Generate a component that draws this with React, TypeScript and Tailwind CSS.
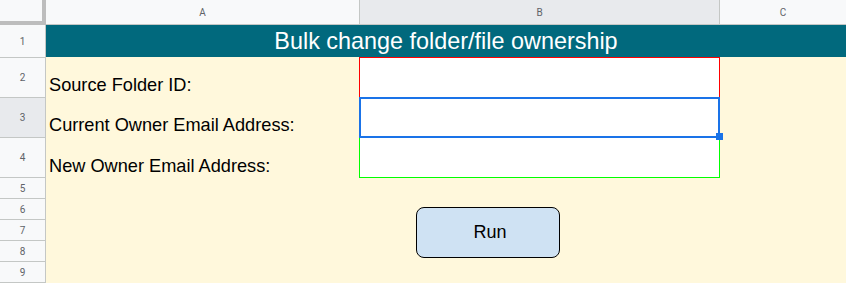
import React from "react";

const hdrFont = { fontFamily: "Roboto, 'Liberation Sans', Arial, sans-serif" };
const cellFont = { fontFamily: "'Liberation Sans', Arial, sans-serif" };

const rowHeights: { n: number; h: string; sel?: boolean }[] = [
  { n: 1, h: "h-[33px]" },
  { n: 2, h: "h-[40px]" },
  { n: 3, h: "h-[40px]", sel: true },
  { n: 4, h: "h-[40px]" },
  { n: 5, h: "h-[21px]" },
  { n: 6, h: "h-[21px]" },
  { n: 7, h: "h-[21px]" },
  { n: 8, h: "h-[21px]" },
  { n: 9, h: "h-[21px]" },
];

function Label({ text, h }: { text: string; h: string }) {
  return (
    <div className={`${h} flex items-end pl-[3px] pb-[2px] text-[18.2px] leading-[20px] text-black whitespace-nowrap`} style={cellFont}>
      {text}
    </div>
  );
}

export default function App() {
  return (
    <div className="relative w-[846px] h-[283px] overflow-hidden bg-[#fff8dc]">
      {/* column headers */}
      <div className="flex h-[25px] bg-[#f8f9fa] text-[10px] text-[#5f6368]" style={hdrFont}>
        <div className="w-[46px] h-[25px] border-r-[4px] border-b-[4px] border-[#bdbdbd] bg-[#f8f9fa]" />
        <div className="w-[314px] flex items-center justify-center border-r border-b border-[#c4c7c5]">A</div>
        <div className="w-[360px] flex items-center justify-center border-r border-b border-[#c4c7c5] bg-[#e8eaed]">B</div>
        <div className="flex-1 flex items-center justify-center border-b border-[#c4c7c5]">C</div>
      </div>

      <div className="flex">
        {/* row headers */}
        <div className="w-[46px] flex flex-col text-[10px] text-[#5f6368]" style={hdrFont}>
          {rowHeights.map((r) => (
            <div
              key={r.n}
              className={`${r.h} flex items-center justify-center border-r border-b border-[#c4c7c5] ${r.sel ? "bg-[#e8eaed]" : "bg-[#f8f9fa]"}`}
            >
              {r.n}
            </div>
          ))}
        </div>

        {/* sheet body */}
        <div className="flex-1 flex flex-col">
          <div
            className="h-[32px] bg-[#01697d] flex items-center justify-center text-white text-[23.4px] leading-[26px] whitespace-nowrap"
            style={cellFont}
          >
            Bulk change folder/file ownership
          </div>
          <div className="flex">
            <div className="w-[313px] flex flex-col">
              <Label text="Source Folder ID:" h="h-[40px]" />
              <Label text="Current Owner Email Address:" h="h-[40px]" />
              <Label text="New Owner Email Address:" h="h-[41px]" />
            </div>
            <div className="w-[361px] flex flex-col">
              <div className="h-[40px] bg-white border-t border-l border-r border-[#ff0000]" />
              <div className="h-[40px] bg-white border-l border-r border-[#00ff00]" />
              <div className="h-[41px] bg-white border-l border-r border-b border-[#00ff00]" />
            </div>
            <div className="flex-1" />
          </div>
        </div>
      </div>

      {/* selection overlay */}
      <div className="absolute left-[359px] top-[97px] w-[361px] h-[41px] border-2 border-[#1a73e8]" />
      <div className="absolute left-[716px] top-[133px] w-[7px] h-[7px] bg-[#1a73e8]" />

      {/* Run button drawing */}
      <div
        className="absolute left-[416px] top-[207px] w-[144px] h-[51px] rounded-[8px] border border-black bg-[#cfe2f3] flex items-center justify-center pl-[4px] text-[18px] text-black"
        style={cellFont}
      >
        Run
      </div>
    </div>
  );
}
